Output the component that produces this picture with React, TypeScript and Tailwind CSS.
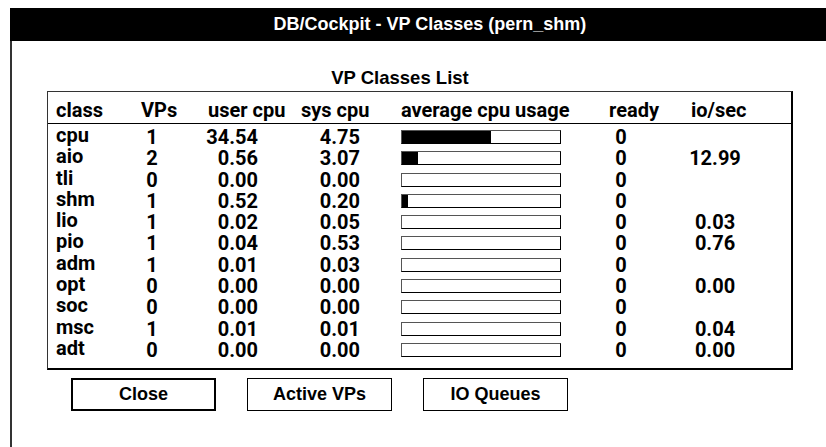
import React from "react";

type Row = {
  cls: string;
  vps: string;
  user: string;
  sys: string;
  fill: number;
  ready: string;
  io: string;
};

const rows: Row[] = [
  { cls: "cpu", vps: "1", user: "34.54", sys: "4.75", fill: 89, ready: "0", io: "" },
  { cls: "aio", vps: "2", user: "0.56", sys: "3.07", fill: 16, ready: "0", io: "12.99" },
  { cls: "tli", vps: "0", user: "0.00", sys: "0.00", fill: 0, ready: "0", io: "" },
  { cls: "shm", vps: "1", user: "0.52", sys: "0.20", fill: 6, ready: "0", io: "" },
  { cls: "lio", vps: "1", user: "0.02", sys: "0.05", fill: 0, ready: "0", io: "0.03" },
  { cls: "pio", vps: "1", user: "0.04", sys: "0.53", fill: 0, ready: "0", io: "0.76" },
  { cls: "adm", vps: "1", user: "0.01", sys: "0.03", fill: 0, ready: "0", io: "" },
  { cls: "opt", vps: "0", user: "0.00", sys: "0.00", fill: 0, ready: "0", io: "0.00" },
  { cls: "soc", vps: "0", user: "0.00", sys: "0.00", fill: 0, ready: "0", io: "" },
  { cls: "msc", vps: "1", user: "0.01", sys: "0.01", fill: 0, ready: "0", io: "0.04" },
  { cls: "adt", vps: "0", user: "0.00", sys: "0.00", fill: 0, ready: "0", io: "0.00" },
];

const uiFont = { fontFamily: '"Liberation Sans", Arial, sans-serif' };
const tableFont = { fontFamily: 'Roboto, "Liberation Sans", sans-serif' };

function UsageBar({ fill }: { fill: number }) {
  return (
    <div className="mt-[3px] h-[14px] w-[160px] border border-black border-t-[#555] border-l-[#555] bg-white">
      <div className="h-full bg-black" style={{ width: fill }} />
    </div>
  );
}

export default function App() {
  return (
    <div
      className="w-[826px] h-[447px] overflow-hidden bg-white text-black font-bold"
      style={uiFont}
    >
      <div className="ml-[10px] mt-[8px] w-[840px]">
        <div className="h-[33px] bg-black text-white text-center text-[18px] leading-[33px]">
          DB/Cockpit - VP Classes (pern_shm)
        </div>

        <div className="h-[420px] border-l-2 border-[#333] pl-[35px]">
          <div className="w-[746px] pr-[40px] pt-[26px] text-center text-[18.5px] leading-[22px]">
            VP Classes List
          </div>

          <div
            className="mt-[2px] w-[746px] border-t border-l border-[#333] border-r-2 border-b-2 border-r-black border-b-black pb-[7px]"
            style={tableFont}
          >
            <div className="grid h-[32px] grid-cols-[85px_67px_93px_100px_208px_82px_1fr] border-b border-black pl-[8px] pt-[4px] text-[20px] leading-[28px]">
              <span>class</span>
              <span>VPs</span>
              <span>user cpu</span>
              <span>sys cpu</span>
              <span>average cpu usage</span>
              <span>ready</span>
              <span>io/sec</span>
            </div>

            <div className="pl-[8px] pt-[3px] text-[20px]">
              {rows.map((r) => (
                <div
                  key={r.cls}
                  className="grid h-[21.3px] grid-cols-[75px_42px_85px_102px_41px_159px_122px_66px] leading-[21.3px]"
                >
                  <span className="leading-[17px]">{r.cls}</span>
                  <span className="text-center">{r.vps}</span>
                  <span className="text-right">{r.user}</span>
                  <span className="text-right">{r.sys}</span>
                  <span />
                  <UsageBar fill={r.fill} />
                  <span className="text-center">{r.ready}</span>
                  <span className="text-center">{r.io}</span>
                </div>
              ))}
            </div>
          </div>

          <div className="mt-[8px] ml-[24px] flex gap-[31px] text-[18px]">
            <button className="h-[33px] w-[145px] border-2 border-black bg-white font-bold">
              Close
            </button>
            <button className="h-[33px] w-[145px] border border-black bg-white font-bold">
              Active VPs
            </button>
            <button className="h-[33px] w-[145px] border border-black bg-white font-bold">
              IO Queues
            </button>
          </div>
        </div>
      </div>
    </div>
  );
}
